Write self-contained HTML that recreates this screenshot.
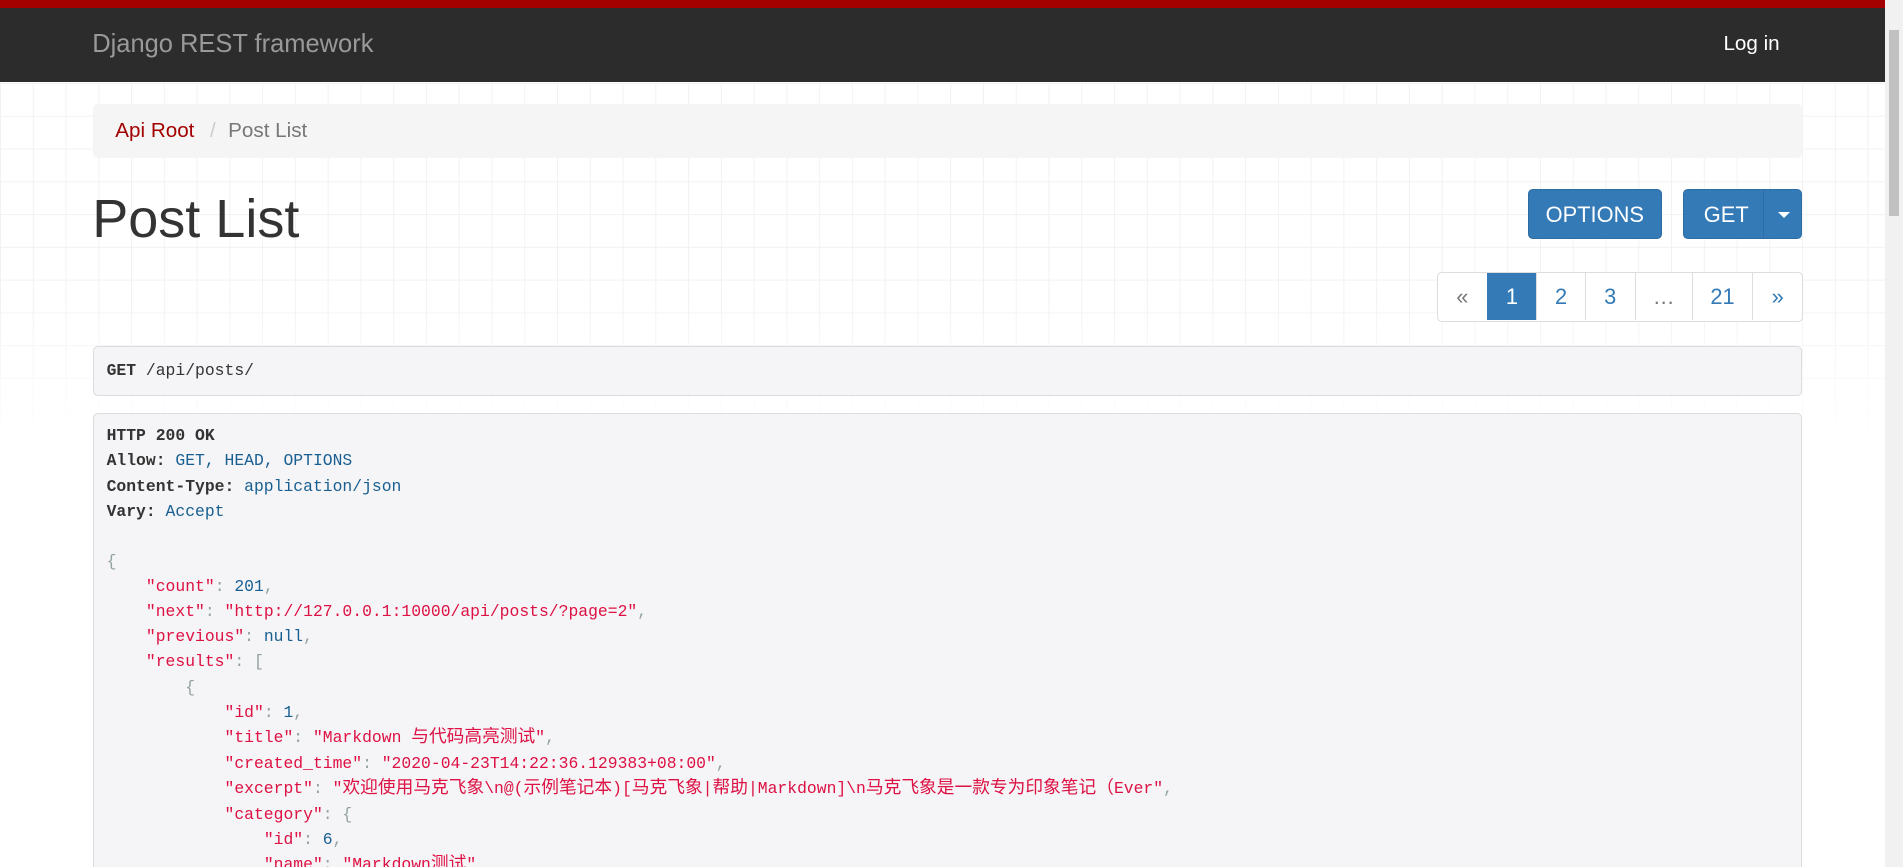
<!DOCTYPE html>
<html><head><meta charset="utf-8">
<style>
html,body{margin:0;padding:0;overflow:hidden}
body{zoom:1.2137;width:1568px;height:714px;position:relative;font-family:"Liberation Sans",Arial,sans-serif;color:#333;background:#fff}
.grid{position:absolute;left:0;top:68px;width:1553px;height:300px;
background-image:linear-gradient(#f2f2f2 1px,transparent 1px),linear-gradient(90deg,#f2f2f2 1px,transparent 1px);
background-size:27px 27px;-webkit-mask-image:linear-gradient(#000 60%,transparent);}
.nav{position:absolute;left:0;top:0;width:1553px;height:61px;border-top:7px solid #A30000;background:#2C2C2C}
.brand{position:absolute;left:76px;top:18px;font-size:21px;color:#999}
.login{position:absolute;left:1420px;top:20px;font-size:17px;color:#fff}
.sb{position:absolute;right:0;top:0;width:15px;height:714px;background:#f1f1f1}
.sb div{position:absolute;left:3px;top:25px;width:9px;height:153px;background:#c1c1c1}
.bc{position:absolute;left:77px;top:86px;width:1408px;height:44px;background:#f5f5f5;border-radius:4px;font-size:17px;line-height:44px}
.bc .a{position:absolute;left:18px;color:#A30000}
.bc .s{position:absolute;left:96px;color:#ccc}
.bc .c{position:absolute;left:111px;color:#777}
h1{position:absolute;left:76px;top:153px;margin:0;font-size:44.5px;font-weight:400;line-height:56px;color:#333}
.btn{position:absolute;top:156px;height:41px;background:#337ab7;border:1px solid #2e6da4;border-radius:4px;color:#fff;font-size:18px;line-height:41px;text-align:center;box-sizing:border-box}
.pg{position:absolute;left:1184px;top:224px;height:41px;display:flex;border:1px solid #ddd;border-radius:4px;box-sizing:border-box;overflow:hidden;background:#fff}
.pg span{display:block;height:39px;line-height:39px;text-align:center;font-size:18px;color:#337ab7;border-left:1px solid #ddd;box-sizing:border-box}
.pg span:first-child{border-left:none}
.box{position:absolute;left:77px;width:1408px;background:#f5f5f7;border:1px solid #dcdce0;border-radius:4px;box-sizing:border-box;font-family:"Liberation Mono","Noto Sans CJK SC",monospace;font-size:13.5px}
pre{margin:0;font-family:"Liberation Mono","Noto Sans CJK SC",monospace;font-size:13.5px;line-height:20.7px;color:#333;white-space:pre}
b{font-weight:700}
.l{color:#195f91}.s{color:#d14}.p{color:#93a1a1}
.cj{font-size:14.6px}
</style></head><body>
<div class="grid"></div>
<div class="nav"><div class="brand">Django REST framework</div><div class="login">Log in</div></div>
<div class="bc"><span class="a">Api Root</span><span class="s">/</span><span class="c">Post List</span></div>
<h1>Post List</h1>
<div class="btn" style="left:1259px;width:110px">OPTIONS</div>
<div class="btn" style="left:1387px;width:98px;text-align:left;padding-left:16px">GET<span style="position:absolute;left:65px;top:0;width:1px;height:39px;background:#2e6da4"></span><span style="position:absolute;left:77px;top:18px;width:0;height:0;border-left:5px solid transparent;border-right:5px solid transparent;border-top:5px solid #fff"></span></div>
<div class="pg"><span style="width:40px;color:#777">«</span><span style="width:41px;background:#337ab7;color:#fff;border-left-color:#337ab7">1</span><span style="width:40px">2</span><span style="width:41px">3</span><span style="width:47px;color:#777">…</span><span style="width:50px">21</span><span style="width:41px">»</span></div>
<div class="box" style="top:285px;height:41px;line-height:39px;padding-left:10px"><b>GET</b> /api/posts/</div>
<div class="box" style="top:340px;height:400px;padding:8px 10px">
<pre><b>HTTP 200 OK</b>
<b>Allow:</b> <span class="l">GET, HEAD, OPTIONS</span>
<b>Content-Type:</b> <span class="l">application/json</span>
<b>Vary:</b> <span class="l">Accept</span>

<span class="p">{</span>
    <span class="s">"count"</span><span class="p">: </span><span class="l">201</span><span class="p">,</span>
    <span class="s">"next"</span><span class="p">: </span><span class="s">"http://127.0.0.1:10000/api/posts/?page=2"</span><span class="p">,</span>
    <span class="s">"previous"</span><span class="p">: </span><span class="l">null</span><span class="p">,</span>
    <span class="s">"results"</span><span class="p">: [</span>
        <span class="p">{</span>
            <span class="s">"id"</span><span class="p">: </span><span class="l">1</span><span class="p">,</span>
            <span class="s">"title"</span><span class="p">: </span><span class="s">"Markdown <span class="cj">与代码高亮测试</span>"</span><span class="p">,</span>
            <span class="s">"created_time"</span><span class="p">: </span><span class="s">"2020-04-23T14:22:36.129383+08:00"</span><span class="p">,</span>
            <span class="s">"excerpt"</span><span class="p">: </span><span class="s">"<span class="cj">欢迎使用马克飞象</span>\n@(<span class="cj">示例笔记本</span>)[<span class="cj">马克飞象</span>|<span class="cj">帮助</span>|Markdown]\n<span class="cj">马克飞象是一款专为印象笔记（</span>Ever"</span><span class="p">,</span>
            <span class="s">"category"</span><span class="p">: {</span>
                <span class="s">"id"</span><span class="p">: </span><span class="l">6</span><span class="p">,</span>
                <span class="s">"name"</span><span class="p">: </span><span class="s">"Markdown<span class="cj">测试</span>"</span></pre>
</div>
<div class="sb"><div></div></div>
</body></html>
